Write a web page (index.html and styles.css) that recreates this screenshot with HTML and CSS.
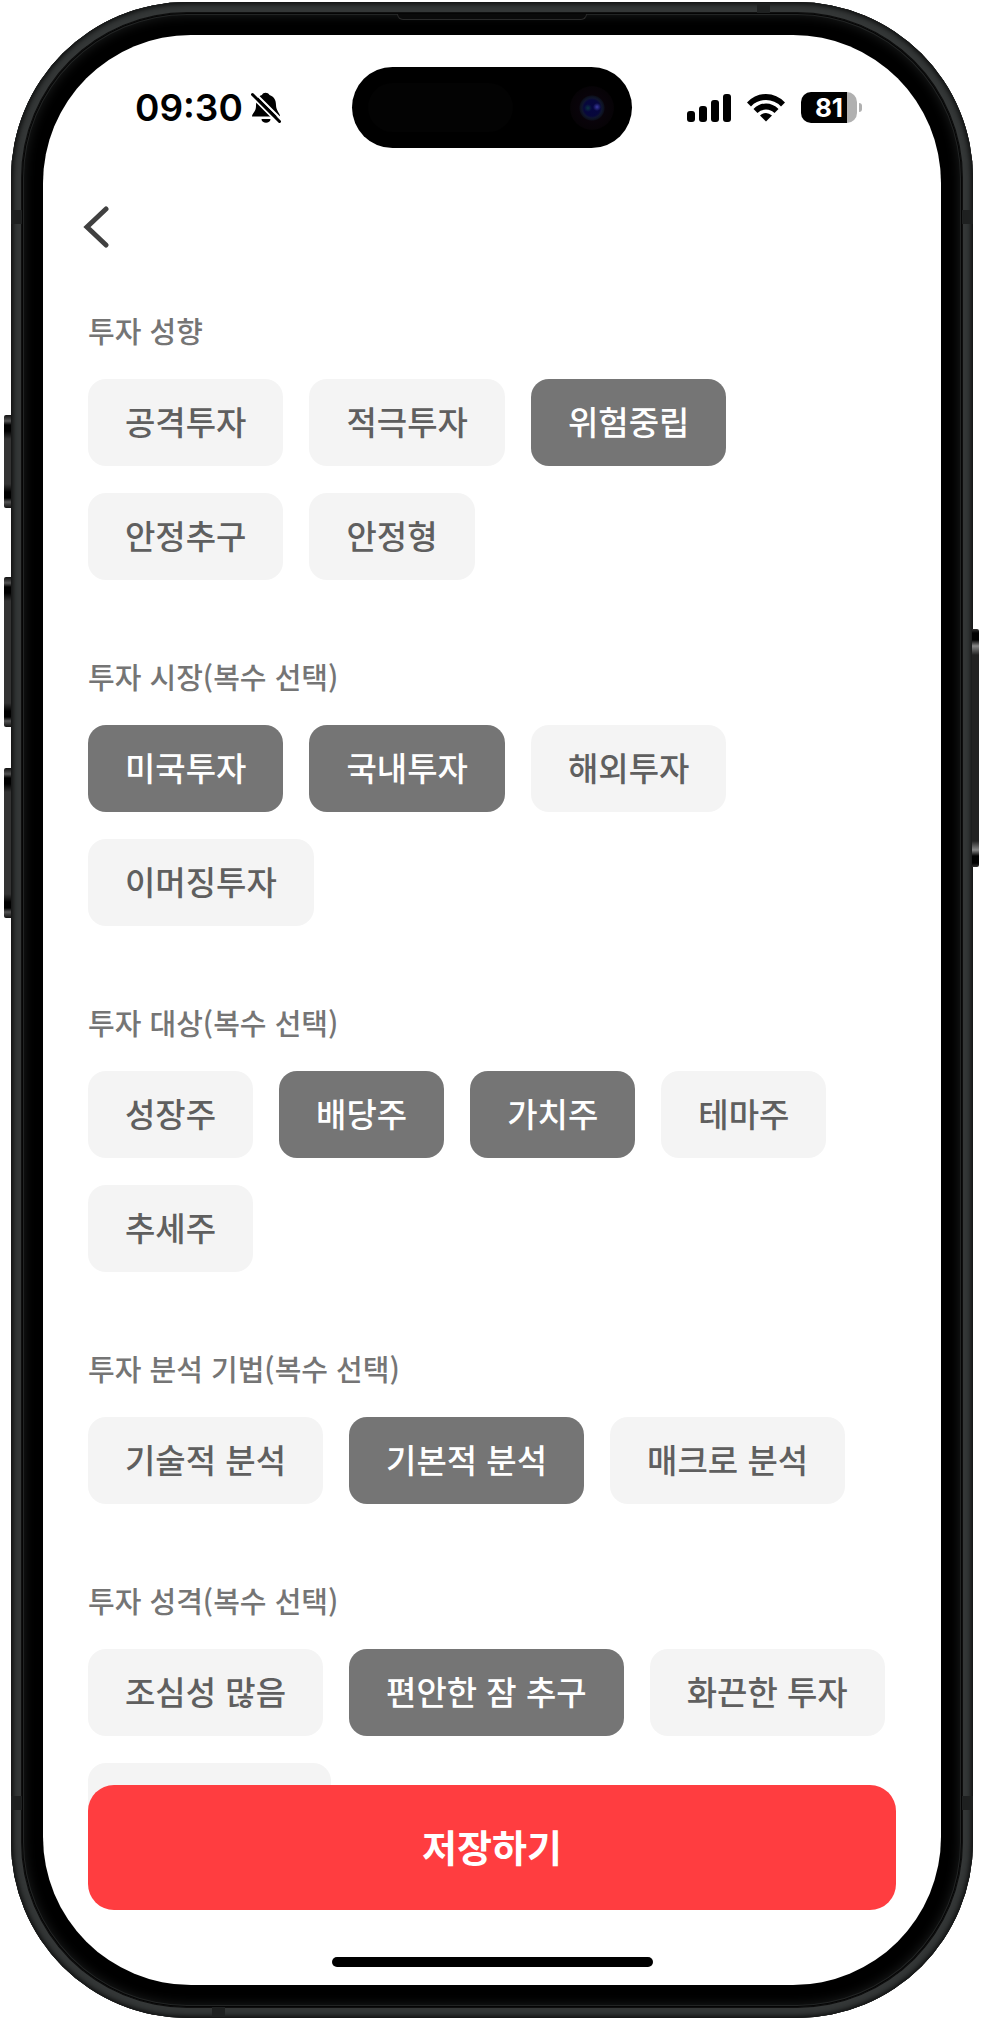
FILE: index.html
```html
<!DOCTYPE html>
<html lang="ko">
<head>
    <meta charset="UTF-8">
    <meta name="viewport" content="width=device-width, initial-scale=1.0">
    <title>투자 성향</title>
    <link rel="stylesheet" href="styles.css">
</head>
<body>
    <div class="phone">
        <span class="side_btn action"></span>
        <span class="side_btn vol_up"></span>
        <span class="side_btn vol_down"></span>
        <span class="side_btn power"></span>
        <span class="band top"></span>
        <span class="band bottom"></span>
        <span class="band left_top"></span>
        <span class="band left_bottom"></span>
        <span class="band right_top"></span>
        <span class="band right_bottom"></span>
        <div class="bezel">
            <span class="speaker"></span>
            <div class="screen">
                <header class="status">
                    <div class="status_left">
                        <span class="time">09:30</span>
                        <svg class="bell" width="30" height="34" viewBox="0 0 30 34">
                            <path d="M1 25.500C1 22 5 21 5 15C5 9 7 5 11 4C12 1 17 1 18.500 4C23 5.500 25 9 25 14C25 20 29 22 29 25.500Z"/>
                            <path d="M10.500 28H19.500C19.500 33 10.500 33 10.500 28Z"/>
                            <path class="gap" d="M4 2L31 29M0 5L27 32"/>
                            <path class="slash" d="M1.500 3.500L28.500 30.500"/>
                        </svg>
                    </div>
                    <div class="island">
                        <span class="sensor"></span>
                        <span class="camera"></span>
                    </div>
                    <div class="status_right">
                        <svg width="44" height="28" viewBox="0 0 44 28">
                            <rect x="0" y="17" width="8" height="11" rx="3"/>
                            <rect x="12" y="12" width="8" height="16" rx="3"/>
                            <rect x="24" y="6" width="8" height="22" rx="3"/>
                            <rect x="36" y="0" width="8" height="28" rx="3"/>
                        </svg>
                        <svg width="38" height="28" viewBox="0 0 38 28">
                            <path d="M0 8.500Q8 0 19 0T38 8.500L34 12.500Q28 6 19 6T4 12.500Z"/>
                            <path d="M6.500 15Q12 9.500 19 9.500T31.500 15L27.500 19Q24 15.500 19 15.500T10.500 19Z"/>
                            <path d="M13 21.500Q16 19 19 19T25 21.500L19 27.500Z"/>
                        </svg>
                        <div class="battery"><span class="level">81</span></div>
                    </div>
                </header>
                <nav class="nav">
                    <a href="#" class="back" aria-label="뒤로">
                        <svg width="26" height="42" viewBox="0 0 26 42"><path d="M23 3L4 21L23 39"/></svg>
                    </a>
                </nav>
                <main class="content">
                    <section class="group">
                        <h2 class="tit">투자 성향</h2>
                        <div class="chips">
                            <button type="button" class="chip">공격투자</button>
                            <button type="button" class="chip">적극투자</button>
                            <button type="button" class="chip on">위험중립</button>
                            <button type="button" class="chip">안정추구</button>
                            <button type="button" class="chip">안정형</button>
                        </div>
                    </section>
                    <section class="group">
                        <h2 class="tit">투자 시장(복수 선택)</h2>
                        <div class="chips">
                            <button type="button" class="chip on">미국투자</button>
                            <button type="button" class="chip on">국내투자</button>
                            <button type="button" class="chip">해외투자</button>
                            <button type="button" class="chip">이머징투자</button>
                        </div>
                    </section>
                    <section class="group">
                        <h2 class="tit">투자 대상(복수 선택)</h2>
                        <div class="chips">
                            <button type="button" class="chip">성장주</button>
                            <button type="button" class="chip on">배당주</button>
                            <button type="button" class="chip on">가치주</button>
                            <button type="button" class="chip">테마주</button>
                            <button type="button" class="chip">추세주</button>
                        </div>
                    </section>
                    <section class="group">
                        <h2 class="tit">투자 분석 기법(복수 선택)</h2>
                        <div class="chips">
                            <button type="button" class="chip">기술적 분석</button>
                            <button type="button" class="chip on">기본적 분석</button>
                            <button type="button" class="chip">매크로 분석</button>
                        </div>
                    </section>
                    <section class="group">
                        <h2 class="tit">투자 성격(복수 선택)</h2>
                        <div class="chips">
                            <button type="button" class="chip">조심성 많음</button>
                            <button type="button" class="chip on">편안한 잠 추구</button>
                            <button type="button" class="chip">화끈한 투자</button>
                            <button type="button" class="chip blank" aria-label="기타"></button>
                        </div>
                    </section>
                </main>
                <footer class="bottom_bar">
                    <button type="button" class="save">저장하기</button>
                    <span class="home"></span>
                </footer>
            </div>
        </div>
    </div>
    <script>
        var chips = document.querySelectorAll(".chip");
        chips.forEach(function(chip) {
            chip.addEventListener("click", function() {
                chip.classList.toggle("on");
            });
        });
    </script>
</body>
</html>
```
FILE: styles.css
```css
* { box-sizing: border-box; }
body { margin: 0; padding: 2px 11px; background: #fff; font-family: "Noto Sans CJK KR", "Noto Sans", sans-serif; }
button { border: 0; font-family: inherit; cursor: pointer; }

/* 휴대폰 프레임 */
.phone { position: relative; display: flex; min-height: calc(100vh - 4px); padding: 11px; border-radius: 176px; background: #0c0d0d; box-shadow: inset 0 0 5px 2px #0c0d0d, inset 0 0 0 10px #343737, inset 0 0 5px 12px #111; }
.bezel { position: relative; flex: 1; display: flex; padding: 22px 21px; border-radius: 165px; background: #000; box-shadow: inset 0 0 0 1px #050505, inset 0 0 0 2px #222424, inset 0 0 12px 2px #1c1e1e; }
.screen { position: relative; flex: 1; display: flex; flex-direction: column; border-radius: 148px; background: #fff; overflow: hidden; }
.speaker { position: absolute; top: 1px; left: 50%; width: 190px; height: 6px; margin-left: -95px; border: 1px solid #2a2a2a; border-top: 0; border-radius: 0 0 6px 6px; background: #0a0a0a; }

.side_btn { position: absolute; left: -7px; width: 7px; border-radius: 2px 0 0 2px; background: linear-gradient(#111, #555 6px, #000 10px, #000 16px, #333 24px, #333 calc(100% - 24px), #000 calc(100% - 16px), #000 calc(100% - 10px), #555 calc(100% - 6px), #111); }
.action { top: 413px; height: 93px; }
.vol_up { top: 575px; height: 150px; }
.vol_down { top: 766px; height: 150px; }
.power { top: 627px; left: auto; right: -6px; height: 238px; border-radius: 0 2px 2px 0; background: linear-gradient(#333, #000 4px, #000 11px, #888 17px, #222 26px, #222 calc(100% - 26px), #888 calc(100% - 17px), #000 calc(100% - 11px), #000 calc(100% - 4px), #333); }
.band { position: absolute; width: 11px; height: 14px; background: #1e2020; }
.band.top, .band.bottom { width: 13px; height: 11px; }
.band.top { top: 1px; right: 203px; }
.band.bottom { bottom: 1px; left: 201px; }
.left_top { top: 208px; left: 0; }
.right_top { top: 208px; right: 0; }
.left_bottom { bottom: 208px; left: 0; }
.right_bottom { bottom: 208px; right: 0; }

/* 상태바 */
.status { display: grid; grid-template-columns: 1fr 280px 1fr; align-items: center; height: 81px; margin-top: 32px; }
.status_left { display: flex; align-items: center; gap: 8px; padding-left: 92px; }
.time { font-family: Inter, sans-serif; font-size: 37px; font-weight: 600; line-height: 40px; }
.bell .gap { stroke: #fff; stroke-width: 2; }
.bell .slash { stroke: #000; stroke-width: 3; stroke-linecap: round; }
.island { display: flex; align-items: center; justify-content: space-between; height: 81px; padding: 0 18px 0 16px; border-radius: 41px; background: #000; }
.sensor { width: 145px; height: 49px; border-radius: 25px; background: #030303; }
.camera { width: 44px; height: 44px; border-radius: 50%; background: radial-gradient(circle at 18px 22px, #0a3340 0, transparent 4px), radial-gradient(circle at 27px 21px, #3a3aa0 0, transparent 4px), radial-gradient(circle, #060640 0, #07073c 8px, #10162e 10px, #0c101c 12px, #09030a 13px, #060306 22px); }
.status_right { display: flex; align-items: center; gap: 16px; padding-left: 55px; }
.battery { position: relative; width: 56px; height: 31px; border-radius: 10px; background: linear-gradient(90deg, #000 46px, #b0b0b0 46px); }
.battery::after { content: ""; position: absolute; top: 11px; right: -5px; width: 3px; height: 9px; border-radius: 0 4px 4px 0; background: #b0b0b0; }
.level { display: block; color: #fff; font-family: Inter, sans-serif; font-size: 26px; font-weight: 700; line-height: 31px; text-align: center; }

.nav { padding: 58px 40px 0; }
.back { display: block; width: 26px; height: 42px; }
.back path { fill: none; stroke: #404040; stroke-width: 5; stroke-linecap: round; }

/* 선택 항목 */
.content { flex: 1; padding: 60px 45px 0; }
.group { margin-bottom: 74px; }
.tit { margin: 0 0 27px; color: #757575; font-size: 29px; font-weight: 500; line-height: 44px; }
.chips { display: flex; flex-wrap: wrap; gap: 27px 26px; }
.chip { height: 87px; padding: 0 37px 4px; border-radius: 18px; background: #f4f4f4; color: #5f5f5f; font-size: 33px; font-weight: 500; line-height: 48px; white-space: nowrap; }
.chip.on { background: #757575; color: #fff; }
.chip.blank { width: 243px; }

.bottom_bar { position: absolute; left: 0; right: 0; bottom: 0; display: flex; flex-direction: column; align-items: center; gap: 47px; padding: 0 45px 18px; }
.save { width: 100%; height: 125px; padding: 0 0 4px; border-radius: 26px; background: #ff3d40; color: #fff; font-size: 38px; font-weight: 700; }
.home { width: 321px; height: 10px; border-radius: 5px; background: #000; }
```
